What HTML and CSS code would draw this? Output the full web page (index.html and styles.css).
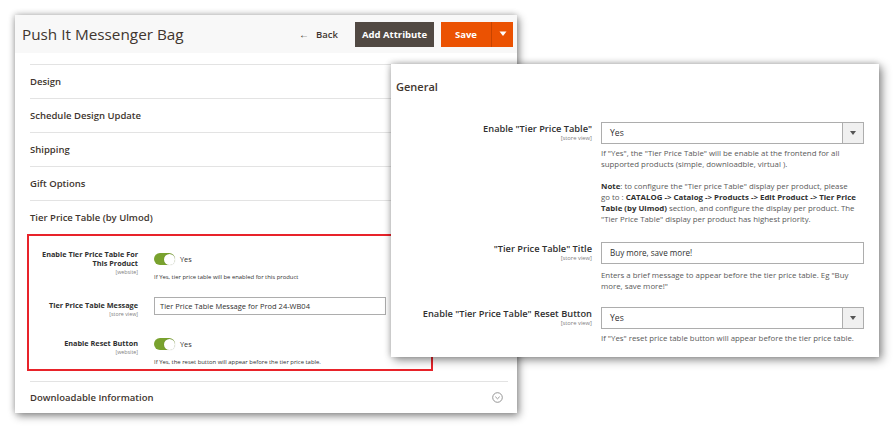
FILE: index.html
```html
<!DOCTYPE html>
<html>
<head>
<meta charset="utf-8">
<link rel="stylesheet" href="styles.css">
</head>
<body>
<div class="canvas">
  <section class="win win-left">
    <header class="page-head">
      <h1 class="page-title">Push It Messenger Bag</h1>
      <a class="back"><span class="back-arrow">&#8592;</span>Back</a>
      <button class="btn btn-dark">Add Attribute</button>
      <div class="btn-split">
        <button class="btn btn-save">Save</button>
        <button class="btn btn-caret"><svg width="8" height="6" viewBox="0 0 8 6"><path d="M0.5 0.5h7L4 5z" fill="#fff"/></svg></button>
      </div>
    </header>
    <div class="sections">
      <div class="sec-row">Design</div>
      <div class="sec-row">Schedule Design Update</div>
      <div class="sec-row">Shipping</div>
      <div class="sec-row">Gift Options</div>
      <div class="sec-row">Tier Price Table (by Ulmod)</div>
      <div class="redbox">
        <div class="lbl">Enable Tier Price Table For This Product<span class="scope">[website]</span></div>
        <div class="fld">
          <div class="tg-line"><span class="toggle"><span class="knob"></span></span><span class="tg-val">Yes</span></div>
          <div class="note-s">If Yes, tier price table will be enabled for this product</div>
        </div>
        <div class="lbl lbl-pad">Tier Price Table Message<span class="scope">[store view]</span></div>
        <div class="fld">
          <div class="inp-s">Tier Price Table Message for Prod 24-WB04</div>
        </div>
        <div class="lbl lbl-pad">Enable Reset Button<span class="scope">[website]</span></div>
        <div class="fld">
          <div class="tg-line"><span class="toggle"><span class="knob"></span></span><span class="tg-val">Yes</span></div>
          <div class="note-s">If Yes, the reset button will appear before the tier price table.</div>
        </div>
      </div>
      <div class="sec-row sec-last">
        <span class="sec-name">Downloadable Information</span>
        <svg class="chev" width="11" height="11" viewBox="0 0 11 11"><circle cx="5.5" cy="5.5" r="4.8" fill="none" stroke="#8a8a8a" stroke-width="0.9"/><path d="M3.3 4.7l2.2 2.1 2.2-2.1" fill="none" stroke="#8a8a8a" stroke-width="0.9"/></svg>
      </div>
    </div>
  </section>

  <section class="win win-right">
    <h2 class="gen-title">General</h2>
    <div class="form">
      <div class="row row1">
        <div class="rlbl">Enable "Tier Price Table"<span class="rscope">[store view]</span></div>
        <div class="rfld">
          <div class="select"><span class="sel-val">Yes</span><span class="sel-btn"><svg width="6" height="4" viewBox="0 0 6 4"><path d="M0 0h6L3 4z" fill="#555"/></svg></span></div>
          <p class="help">If "Yes", the "Tier Price Table" will be enable at the frontend for all supported products (simple, downloadble, virtual ).</p>
          <p class="help help-note"><b>Note</b>: to configure the "Tier price Table" display per product, please<br>go to : <b>CATALOG -&gt; Catalog -&gt; Products -&gt; Edit Product -&gt; Tier Price Table (by Ulmod)</b> section, and configure the display per product. The "Tier Price Table" display per product has highest priority.</p>
        </div>
      </div>
      <div class="row row2">
        <div class="rlbl">"Tier Price Table" Title<span class="rscope">[store view]</span></div>
        <div class="rfld">
          <div class="input">Buy more, save more!</div>
          <p class="help help-in">Enters a brief message to appear before the tier price table. Eg "Buy more, save more!"</p>
        </div>
      </div>
      <div class="row row3">
        <div class="rlbl">Enable "Tier Price Table" Reset Button<span class="rscope">[store view]</span></div>
        <div class="rfld">
          <div class="select"><span class="sel-val">Yes</span><span class="sel-btn"><svg width="6" height="4" viewBox="0 0 6 4"><path d="M0 0h6L3 4z" fill="#555"/></svg></span></div>
          <p class="help">If "Yes" reset price table button will appear before the tier price table.</p>
        </div>
      </div>
    </div>
  </section>
</div>
</body>
</html>
```

FILE: styles.css
```css
* { box-sizing: border-box; }
html, body { margin: 0; padding: 0; background: #fff; }
body { font-family: "Open Sans", "Noto Sans", Arial, sans-serif; color: #303030; }
.canvas { position: relative; width: 894px; height: 428px; overflow: hidden; background: #fff; }

.win { position: absolute; background: #fff; }
.win-left {
  left: 15px; top: 15px; width: 502px; height: 398px;
  box-shadow: 2px 3px 8px rgba(0,0,0,0.45), -1px -1px 6px rgba(0,0,0,0.18);
}
.win-right {
  left: 391px; top: 64px; width: 488px; height: 293px;
  box-shadow: 3px 3px 9px rgba(0,0,0,0.45), -1px -1px 6px rgba(0,0,0,0.2);
  padding: 16px 15px 0 5px;
}

/* header */
.page-head {
  height: 38px; background: #f8f8f8; display: flex; align-items: center;
  padding: 0 4px 0 7px;
}
.page-title { flex: 1; margin: 0; font-size: 15.3px; font-weight: 400; color: #41362f; letter-spacing: 0; }
.back { font-size: 9.5px; font-weight: 600; color: #41362f; margin-right: 17px; display: flex; align-items: center; }
.back-arrow { font-size: 10px; margin-right: 7px; }
.btn { border: 0; font-family: inherit; font-weight: 700; font-size: 9.5px; color: #fff; height: 25px; padding: 0; cursor: default; }
.btn-dark { background: #514943; width: 79px; margin-right: 7px; }
.btn-split { display: flex; height: 25px; }
.btn-save { background: #eb5202; width: 50px; }
.btn-caret { background: #eb5202; width: 22px; border-left: 1px solid #c74400; display: flex; align-items: center; justify-content: center; }

/* sections */
.sections { padding: 11px 9px 0 15px; }
.sec-row {
  border-top: 1px solid #e3e3e3; height: 34px; display: flex; align-items: center;
  font-size: 9.5px; font-weight: 600; color: #41362f;
}
.sec-last { height: 32px; justify-content: space-between; margin-top: 10px; padding-right: 5px; }
.chev { display: block; }

.redbox {
  margin-left: -3px; width: 406px; height: 137px;
  border: 2px solid #e8232a;
  display: grid; grid-template-columns: 109px 232px; column-gap: 16px;
  grid-auto-rows: min-content;
  padding-top: 14px;
}
.lbl { text-align: right; font-size: 7.3px; font-weight: 700; line-height: 9px; color: #303030; }
.lbl-pad { padding-top: 4px; }
.scope { display: block; font-size: 5.3px; font-weight: 400; color: #808080; line-height: 9px; }
.redbox .lbl:nth-of-type(3), .redbox .fld:nth-of-type(4) { margin-top: 15px; }
.redbox .lbl:nth-of-type(5), .redbox .fld:nth-of-type(6) { margin-top: 16px; }
.tg-line { height: 18px; display: flex; align-items: center; }
.toggle { width: 21px; height: 12px; border-radius: 6px; background: #79a22e; position: relative; display: inline-block; }
.knob { position: absolute; right: 0.5px; top: 0.5px; width: 11px; height: 11px; border-radius: 50%; background: #fff; box-shadow: 0 0 1px rgba(0,0,0,0.3); }
.tg-val { font-size: 7.3px; margin-left: 5px; color: #303030; }
.note-s { font-size: 5.9px; line-height: 9px; color: #303030; margin-top: 5px; white-space: nowrap; }
.inp-s {
  height: 18px; border: 1px solid #adadad; font-size: 7.5px; line-height: 16px;
  padding-left: 5px; color: #303030; white-space: nowrap;
}

/* right form */
.gen-title { margin: 0; font-size: 11px; font-weight: 600; line-height: 14px; color: #41362f; }
.form { margin-top: 28px; }
.row { display: grid; grid-template-columns: 196px 263px; column-gap: 9px; }
.row2 { margin-top: 17px; }
.row3 { margin-top: 15px; }
.rlbl { text-align: right; font-size: 9.25px; font-weight: 600; line-height: 12px; padding-top: 1px; color: #303030; white-space: nowrap; }
.rscope { display: block; font-size: 5.8px; font-weight: 400; line-height: 7px; color: #808080; }
.select {
  height: 22px; border: 1px solid #adadad; display: flex; align-items: stretch;
}
.sel-val { flex: 1; font-size: 8.6px; line-height: 20px; padding-left: 8px; color: #303030; }
.sel-btn { width: 21px; border-left: 1px solid #adadad; background: #f0f0f0; display: flex; align-items: center; justify-content: center; }
.input { height: 22px; border: 1px solid #adadad; font-size: 8.1px; line-height: 20px; padding-left: 8px; color: #303030; }
.help { margin: 4px 0 0; font-size: 7.85px; line-height: 11px; color: #5a5a5a; }
.help b { color: #303030; font-weight: 700; }
.help-note { margin-top: 11px; }
.help-in { margin-top: 6px; }
```
